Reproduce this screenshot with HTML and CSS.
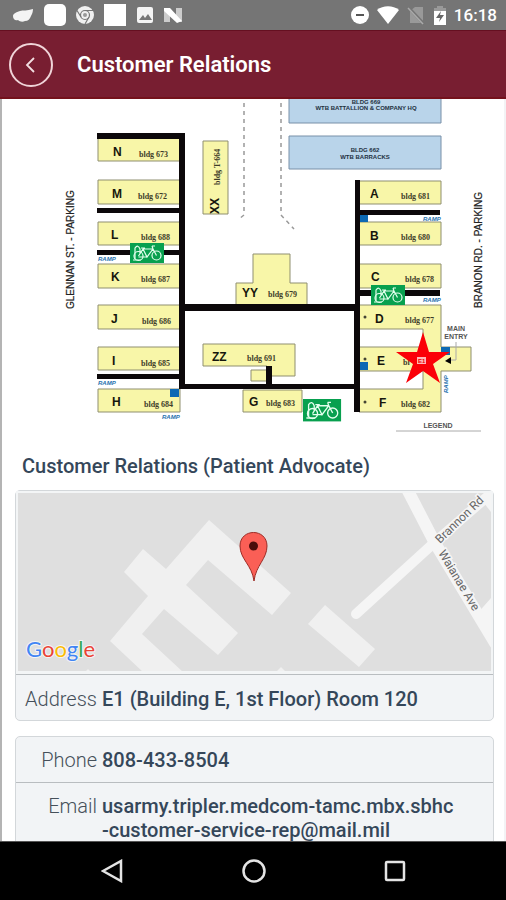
FILE: index.html
```html
<!DOCTYPE html>
<html lang="en">
<head>
<meta charset="utf-8">
<meta name="viewport" content="width=device-width, initial-scale=1">
<title>Customer Relations</title>
<link rel="stylesheet" href="styles.css">
</head>
<body>
<div class="status">
  <div class="status-group">
    <svg width="24" height="24" viewBox="0 0 24 24"><path d="M2 13c0-2 3-4 7-5 3-1 7 0 13-2 0 3-1 5-2 7-1 3-3 5-6 5-2 1-5 1-7-1-3 1-5-1-5-4z" fill="#f4f4f4"/></svg>
    <svg width="24" height="24" viewBox="0 0 24 24"><rect x="1" y="1" width="22" height="22" rx="5" fill="#fff"/></svg>
    <svg width="20" height="24" viewBox="0 0 20 24"><circle cx="10" cy="12" r="9" fill="#f0f0f0"/><g fill="none" stroke="#777" stroke-width="1.2"><circle cx="10" cy="12" r="4.500"/><path d="M10 7.500h8M6 14 2 7.500M14 14l-4 7"/></g><circle cx="10" cy="12" r="2" fill="#999"/></svg>
    <svg width="24" height="24" viewBox="0 0 24 24"><path d="M1 1h22v22H1z" fill="#fff"/></svg>
    <svg width="20" height="24" viewBox="0 0 20 24"><rect x="2" y="4" width="16" height="16" rx="2" fill="#f4f4f4"/><path d="m4 17 4-5 2 3 3-4 4 6z" fill="#777"/></svg>
    <svg width="20" height="24" viewBox="0 0 20 24"><path d="M1 5h6v14H1zM13 5h6v14h-6z" fill="#ccc"/><path d="M1 5h6l12 13-5 2L1 8z" fill="#fff"/></svg>
  </div>
  <div class="status-group status-right">
    <svg width="20" height="24" viewBox="0 0 20 24"><circle cx="10" cy="12" r="9" fill="#fff"/><path d="M6 12h8" stroke="#555" stroke-width="2"/></svg>
    <svg width="24" height="24" viewBox="0 0 24 24"><path d="M1 7c6-5 16-5 22 0L12 21z" fill="#fff"/></svg>
    <svg width="20" height="24" viewBox="0 0 20 24"><path d="M4 8 9 4h8v16H4z" fill="#999"/><path d="m3 5 15 16" stroke="#757575" stroke-width="3"/><path d="m2 5 15 16" stroke="#aaa" stroke-width="1.500"/></svg>
    <svg width="16" height="24" viewBox="0 0 16 24"><path d="M5 3h6v2h3v6H2V5h3z" fill="#999"/><path d="M2 8h12v14H2z" fill="#fff"/><path d="m9 8-5 7h4l-1 4 5-7H8z" fill="#666"/></svg>
    <span class="clock">16:18</span>
  </div>
</div>
<header class="header">
  <button class="back" type="button" aria-label="Back"><svg width="16" height="20" viewBox="0 0 16 20"><path d="m11 3-7 7 7 7" fill="none" stroke="#f3dfe2" stroke-width="1.800"/></svg></button>
  <h1 class="title">Customer Relations</h1>
</header>
<main class="content">
  <svg class="plan" viewBox="0 99 506 345" role="img" aria-label="Campus plan">
    <defs>
      <g id="bike">
        <rect width="34" height="20" fill="#08a04f"/>
        <g fill="none" stroke="#e4ffee" stroke-width="1.200"><circle cx="8.500" cy="13" r="4.500"/><circle cx="26.500" cy="12.500" r="4.500"/><path d="M8.500 13 13 6h10l3.500 6.500M13 6l4 8 6-8M17 14H8.500M22 3l1 3M22 3h3M11 5h4M5 16V5q3-4 5 1v5M3 17h8"/></g>
      </g>
    </defs>
    <g class="outline blue">
      <path d="M289 97h152v26H289zM289 136h152v33H289z"/>
    </g>
    <g class="outline yellow">
      <path d="M98 138h82v23H98zM98 180h82v24H98zM98 222h82v23H98zM98 264h82v24H98zM98 305h82v24H98zM98 347h82v23H98zM98 389h82v23H98z"/>
      <path d="M203 141h25v73h-25z"/>
      <path d="M359 181h82v23h-82zM359 222h82v23h-82zM359 264h82v24h-82z"/>
      <path d="M359 305h82v42h30v24h-30v41h-82v-23h64v-18h-64v-24h64v-18h-64z"/>
      <path d="M253 254h37v29h17v22h-71v-22h17z"/>
      <path d="M203 344h92v32h-28v-10h-64zM251 370h16v11h-16zM243 390h59v22h-59z"/>
    </g>
    <g class="walk">
      <path d="M97 133h88v171h170V180h5v232h-6v-23H179V139H97zM185 311v73h169v-73z" fill-rule="evenodd"/>
      <path d="M97 208h83v5H97zM97 250h83v5H97zM97 374h83v5H97zM359 210h81v5h-81zM359 290h81v6h-81zM266 366h6v19h-6z"/>
    </g>
    <path class="ramp-box" d="M170 389h9v8h-9zM360 215h8v7h-8zM360 362h8v8h-8zM441 347h9v8h-9z"/>
    <path d="M244 103v112l-5 4M281 103v112l13 14" fill="none" stroke="#999" stroke-width="1.500" stroke-dasharray="4 4"/>
    <g class="wing">
      <text x="113" y="156">N</text><text x="112" y="198">M</text><text x="111" y="239">L</text><text x="111" y="281">K</text><text x="111" y="323">J</text><text x="112" y="365">I</text><text x="112" y="406">H</text>
      <text x="370" y="198">A</text><text x="370" y="240">B</text><text x="371" y="281">C</text><text x="375" y="323">D</text><text x="377" y="365">E</text><text x="379" y="407">F</text>
      <text x="242" y="297">YY</text><text x="212" y="361">ZZ</text><text x="249" y="406">G</text>
      <text transform="translate(219 214) rotate(-90)">XX</text>
    </g>
    <g class="bldg">
      <text x="139" y="157">bldg 673</text><text x="138" y="199">bldg 672</text><text x="141" y="240">bldg 688</text><text x="141" y="282">bldg 687</text><text x="142" y="324">bldg 686</text><text x="141" y="366">bldg 685</text><text x="144" y="407">bldg 684</text>
      <text x="401" y="199">bldg 681</text><text x="401" y="240">bldg 680</text><text x="405" y="282">bldg 678</text><text x="405" y="323">bldg 677</text><text x="403" y="365">bl</text><text x="401" y="407">bldg 682</text>
      <text x="268" y="297">bldg 679</text><text x="247" y="361">bldg 691</text><text x="266" y="406">bldg 683</text>
      <text transform="translate(220 185) rotate(-90)">bldg T-664</text>
    </g>
    <g class="note">
      <text x="366" y="104">BLDG 669</text><text x="366" y="110">WTB BATTALLION &amp; COMPANY HQ</text>
      <text x="365" y="152">BLDG 662</text><text x="365" y="159">WTB BARRACKS</text>
    </g>
    <g class="ramp">
      <text x="98" y="261">RAMP</text><text x="98" y="385">RAMP</text><text x="162" y="419">RAMP</text><text x="423" y="221">RAMP</text><text x="423" y="302">RAMP</text>
      <text transform="translate(448 393) rotate(-90)">RAMP</text>
    </g>
    <g class="street">
      <text transform="translate(74 309) rotate(-90)">GLENNAN ST. - PARKING</text>
      <text transform="translate(482 308) rotate(-90)">BRANON RD. - PARKING</text>
    </g>
    <g class="entry"><text x="456" y="331">MAIN</text><text x="456" y="339">ENTRY</text><text x="438" y="428">LEGEND</text></g>
    <path d="M456 342v18h-6M396 431h85" fill="none" stroke="#aaa"/>
    <path d="m445 361 6-4v7z"/>
    <g fill="#443"><circle cx="365" cy="317" r="1.500"/><circle cx="365" cy="359" r="1.500"/><circle cx="365" cy="402" r="1.500"/></g>
    <use href="#bike" x="130" y="243"/><use href="#bike" x="371" y="285"/>
    <use href="#bike" transform="translate(303 399) scale(1.120)"/>
    <path d="m423 332 6 20h21l-17 12 7 19-17-12-17 12 7-19-17-12h21z" fill="#fb0007"/>
    <rect x="417" y="357" width="9" height="7" fill="#ffb8b8"/><text class="pin-code" x="418" y="363">E1</text>
  </svg>

  <h2 class="section-title">Customer Relations (Patient Advocate)</h2>

  <section class="card">
    <svg class="map" viewBox="18 493 473 178" role="img" aria-label="Street map">
      <path d="M18 493h473v178H18z" fill="#dfdfdf"/>
      <g fill="#f0f0f0">
        <path d="m209 520 82 73-19 22-64-55-22 25 52 48-20 22-54-46-22 25 41 38h-40l-33-31 38-45-24-24 19-23 23 20z"/>
        <path d="m325 605 50 44-16 18-51-43zM281 667l5 5h-10zM88 669l3 3h-6z"/>
      </g>
      <g fill="none" stroke="#f5f5f5" stroke-linecap="round"><path d="m356 614 79-72 60-52" stroke-width="10"/><path d="m406 487 29 56 60 100" stroke-width="12"/></g>
      <path d="m491 598-15 17 15 28zM480 498l11-5v19z" fill="#f5f5f5"/>
      <g class="road"><text transform="translate(440 544) rotate(-44)">Brannon Rd</text><text transform="translate(438 553) rotate(59)">Waianae Ave</text></g>
      <path d="M254 581c-2-16-14-22-14-35 0-18 27-18 27 0 0 13-11 19-13 35z" fill="#fa5f56" stroke="#9c2c26"/>
      <circle cx="253.500" cy="546" r="4.500" fill="#4b0d0b"/>
      <text class="brand" x="26" y="657"><tspan fill="#4285f4">G</tspan><tspan fill="#ea4335">o</tspan><tspan fill="#fbbc05">o</tspan><tspan fill="#4285f4">g</tspan><tspan fill="#34a853">l</tspan><tspan fill="#ea4335">e</tspan></text>
    </svg>
    <dl class="rows">
      <div class="row"><dt>Address</dt><dd>E1 (Building E, 1st Floor) Room 120</dd></div>
    </dl>
  </section>

  <section class="card">
    <dl class="rows">
      <div class="row"><dt>Phone</dt><dd><a href="tel:808-433-8504">808-433-8504</a></dd></div>
      <div class="row"><dt>Email</dt><dd><a href="mailto:usarmy.tripler.medcom-tamc.mbx.sbhc-customer-service-rep@mail.mil">usarmy.tripler.medcom-tamc.mbx.sbhc<br>-customer-service-rep@mail.mil</a></dd></div>
    </dl>
  </section>
</main>
<nav class="navbar" aria-label="System">
  <button type="button" aria-label="Back"><svg width="24" height="24" viewBox="0 0 24 24"><path d="M20 2v20L2 12z"/></svg></button>
  <button type="button" aria-label="Home"><svg width="24" height="24" viewBox="0 0 24 24"><circle cx="12" cy="12" r="10.500"/></svg></button>
  <button type="button" aria-label="Overview"><svg width="24" height="24" viewBox="0 0 24 24"><rect x="3" y="3" width="18" height="18" rx="1"/></svg></button>
</nav>
</body>
</html>
```
FILE: styles.css
```css
* { box-sizing: border-box; }

body {
  margin: 0;
  height: 100vh;
  display: flex;
  flex-direction: column;
  font-family: Roboto, "Liberation Sans", sans-serif;
  font-size: 20px;
  line-height: 24px;
  color: #35475a;
  background: #fff;
}

button {
  padding: 0;
  border: 0;
  background: none;
  cursor: pointer;
}

svg { display: block; }

.status {
  flex: none;
  height: 30px;
  padding: 0 9px 0 11px;
  display: flex;
  align-items: center;
  justify-content: space-between;
  background: #757575;
}

.status-group {
  display: flex;
  align-items: center;
  gap: 8px;
}

.status-right { gap: 6px; }

.clock {
  font-size: 17px;
  font-weight: 500;
  color: #fff;
}

.header {
  flex: none;
  height: 69px;
  padding: 2px 9px 0;
  display: flex;
  align-items: center;
  gap: 24px;
  background: #781e31;
  border-top: 1px solid #650f20;
  border-bottom: 2px solid #74121c;
}

.back {
  width: 44px;
  height: 44px;
  border: 2px solid #f0d4d8;
  border-radius: 50%;
  display: flex;
  align-items: center;
  justify-content: center;
}

.title {
  margin: 0;
  font-size: 22px;
  font-weight: 600;
  line-height: 28px;
  color: #fff;
}

.content {
  flex: 1;
  min-height: 0;
  overflow-y: auto;
  scrollbar-width: none;
  box-shadow: inset 2px 0 #b4b4b4, inset -2px 0 #f3f3f5;
}

.plan, .map {
  width: 100%;
  height: auto;
}

.outline { stroke: #8f8f70; }
.blue { fill: #b9d4ea; stroke: #7890a8; }
.yellow { fill: #f8f6a8; }
.walk { fill: #0c080a; }
.ramp-box { fill: #0c69b4; }
.wing { font: bold 12px "Liberation Sans", sans-serif; fill: #16160c; }
.bldg { font: bold 8px "Liberation Serif", serif; fill: #3e3c28; }
.note { font: bold 6px "Liberation Sans", sans-serif; text-anchor: middle; fill: #22303e; }
.ramp { font: italic bold 6px "Liberation Sans", sans-serif; fill: #2470ae; }
.street { font: 10px "Liberation Sans", sans-serif; fill: #222; stroke: #222; stroke-width: 0.2px; }
.entry { font: bold 7px "Liberation Sans", sans-serif; text-anchor: middle; fill: #555; }
.pin-code { font: bold 6px "Liberation Sans", sans-serif; fill: #e00; }

.section-title {
  margin: 9px 22px 11px;
  font-size: 20px;
  font-weight: 500;
  line-height: 26px;
}

.card {
  margin: 0 12px 15px 15px;
  border: 1px solid #d3d7da;
  border-radius: 5px;
  background: #f2f4f6;
}

.map {
  border: 2px solid #f3f5f6;
  border-bottom-width: 3px;
}

.road {
  font-size: 12px;
  fill: #666;
  stroke: #f5f5f5;
  stroke-width: 3px;
  paint-order: stroke;
}

.brand {
  font: 22px Lato, sans-serif;
  stroke: #f5f5f5;
  stroke-width: 2px;
  paint-order: stroke;
}

.rows { margin: 0; }

.row {
  display: grid;
  grid-template-columns: 81px 1fr;
  gap: 5px;
  padding: 11px 0 10px;
}

.map + .rows, .row + .row { border-top: 1px solid #b9bdc0; }
.map + .rows .row { padding: 12px 0 9px; }

dt {
  font-weight: 300;
  text-align: right;
  color: #46505a;
}

dd {
  margin: 0;
  font-weight: 500;
}

dd a {
  color: inherit;
  text-decoration: none;
}

.navbar {
  flex: none;
  height: 59px;
  padding: 0 40px 0 42px;
  display: grid;
  grid-template-columns: repeat(3, 1fr);
  justify-items: center;
  align-items: center;
  background: #000;
  border-top: 1px solid #555;
}

.navbar svg {
  fill: none;
  stroke: #e4e4e4;
  stroke-width: 2.5px;
}
```
